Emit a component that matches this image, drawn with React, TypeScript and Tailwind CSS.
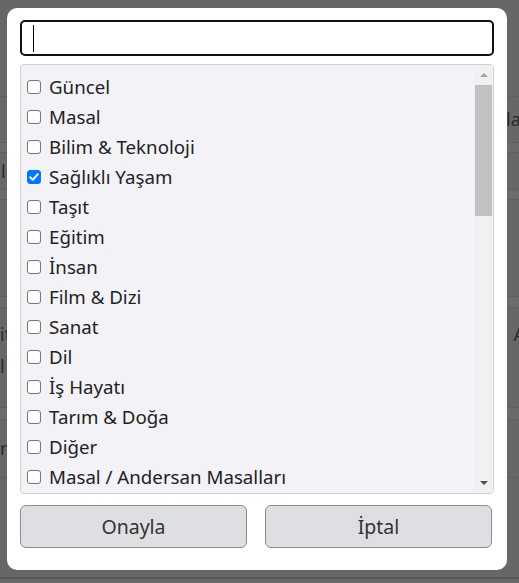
import React, { useState } from 'react';

const categories = [
  'Güncel',
  'Masal',
  'Bilim & Teknoloji',
  'Sağlıklı Yaşam',
  'Taşıt',
  'Eğitim',
  'İnsan',
  'Film & Dizi',
  'Sanat',
  'Dil',
  'İş Hayatı',
  'Tarım & Doğa',
  'Diğer',
  'Masal / Andersan Masalları',
  'Masal / Grimm Masalları',
  'Masal / Nasreddin Hoca',
  'Spor',
  'Müzik',
  'Tarih',
  'Edebiyat',
  'Ekonomi',
  'Siyaset',
  'Magazin',
  'Seyahat',
  'Yemek',
  'Psikoloji',
  'Felsefe',
  'Çevre',
  'Hayvanlar',
  'Uzay',
  'Oyun',
  'Moda',
  'Mimari',
  'Fotoğraf',
  'Kültür',
  'Eğlence',
  'Çocuk',
  'Aile',
  'Bilgisayar',
  'İnternet',
  'Mobil',
  'Hukuk',
  'Kariyer',
];

// faded page that sits behind the overlay
const BackgroundPage = () => (
  <div className="h-[583px] overflow-hidden bg-[#676767] text-[18px] text-[#2a2a2a]">
    <div className="h-[97px] border-b border-[#5e5e5e]"></div>
    <div className="flex h-[46px] items-center border-b border-[#5e5e5e]">
      <span className="ml-[506px] whitespace-nowrap">lar</span>
    </div>
    <div className="h-[10px] border-b border-[#5e5e5e] bg-[#6b6b6b]"></div>
    <div className="flex h-[37px] items-center border-b border-[#5e5e5e]">
      <span className="ml-[1px] whitespace-nowrap">lı</span>
    </div>
    <div className="h-[10px] border-b border-[#5e5e5e] bg-[#6b6b6b]"></div>
    <div className="h-[97px] border-b border-[#5e5e5e]"></div>
    <div className="h-[11px] border-b border-[#5e5e5e] bg-[#6b6b6b]"></div>
    <div className="flex h-[100px] items-start justify-between border-b border-[#5e5e5e] pt-[10px]">
      <div className="leading-[32px]">
        <div>it</div>
        <div>l</div>
      </div>
      <span className="mr-[-6px] leading-[32px]">A</span>
    </div>
    <div className="h-[12px] border-b border-[#5e5e5e] bg-[#6b6b6b]"></div>
    <div className="flex h-[58px] items-center border-b border-[#5e5e5e]">
      <span className="whitespace-nowrap">ne</span>
    </div>
    <div className="h-[101px] border-b-2 border-[#575757]"></div>
  </div>
);

// classic scrollbar look, drawn so it shows the same in every browser
const FakeScrollbar = () => (
  <div className="flex w-[19px] shrink-0 flex-col bg-[#f1f1f1]">
    <div className="flex h-[20px] items-center justify-center">
      <div className="h-0 w-0 border-x-[4px] border-b-[4px] border-x-transparent border-b-[#a3a3a3]"></div>
    </div>
    <div className="ml-[1px] h-[131px] w-[17px] bg-[#c1c1c1]"></div>
    <div className="flex-1"></div>
    <div className="flex h-[20px] items-center justify-center">
      <div className="h-0 w-0 border-x-[4px] border-t-[4px] border-x-transparent border-t-[#505050]"></div>
    </div>
  </div>
);

const CheckBox = ({ checked, onChange }: { checked: boolean; onChange: () => void }) => (
  <span className="relative flex h-[14px] w-[14px] shrink-0">
    <input
      type="checkbox"
      checked={checked}
      onChange={onChange}
      className="m-0 h-[14px] w-[14px] cursor-pointer appearance-none rounded-[3px] border border-[#767676] bg-white checked:border-[#0075ff] checked:bg-[#0075ff]"
    />
    {checked && (
      <svg className="pointer-events-none absolute left-0 top-0" width="14" height="14" viewBox="0 0 14 14" fill="none">
        <path d="M3.2 7.2L5.8 9.8L10.8 4.2" stroke="white" strokeWidth="2" strokeLinecap="round" strokeLinejoin="round" />
      </svg>
    )}
  </span>
);

export default function App() {
  const [checked, setChecked] = useState<string[]>(['Sağlıklı Yaşam']);

  const toggle = (name: string) => {
    setChecked(prev => prev.includes(name) ? prev.filter(c => c !== name) : [...prev, name]);
  };

  return (
    <div className="relative h-[583px] w-[519px] overflow-hidden" style={{ fontFamily: '"Noto Sans", "Open Sans", sans-serif' }}>
      <BackgroundPage />

      <div className="absolute left-[7px] top-[8px] flex h-[562px] w-[500px] flex-col rounded-[10px] bg-white px-[13px] pt-[12px]">
        <div className="relative">
          <input
            type="text"
            className="h-[36px] w-full rounded-[5px] border-2 border-[#111] bg-white px-[12px] text-[20px] caret-transparent outline-none"
          />
          <span className="absolute left-[13px] top-[5px] h-[27px] w-px bg-black"></span>
        </div>

        <div className="mt-[8px] flex h-[430px] overflow-hidden rounded-[4px] border border-[#d0d0d4] bg-[#f2f2f7]">
          <div className="flex-1 overflow-y-scroll pt-[7px] [scrollbar-width:none]">
            {categories.map(name => (
              <label key={name} className="flex h-[30px] cursor-pointer items-center pl-[6px] text-[18.7px] text-[#222]">
                <CheckBox checked={checked.includes(name)} onChange={() => toggle(name)} />
                <span className="ml-[8px] whitespace-nowrap">{name}</span>
              </label>
            ))}
          </div>
          <FakeScrollbar />
        </div>

        <div className="mt-[11px] flex gap-[18px]">
          <button className="h-[43px] w-[227px] rounded-[6px] border border-[#8c8c8c] bg-[#dedfe3] text-[19.5px] text-[#333]">
            Onayla
          </button>
          <button className="h-[43px] w-[227px] rounded-[6px] border border-[#8c8c8c] bg-[#dedfe3] text-[19.5px] text-[#333]">
            İptal
          </button>
        </div>
      </div>
    </div>
  );
}
